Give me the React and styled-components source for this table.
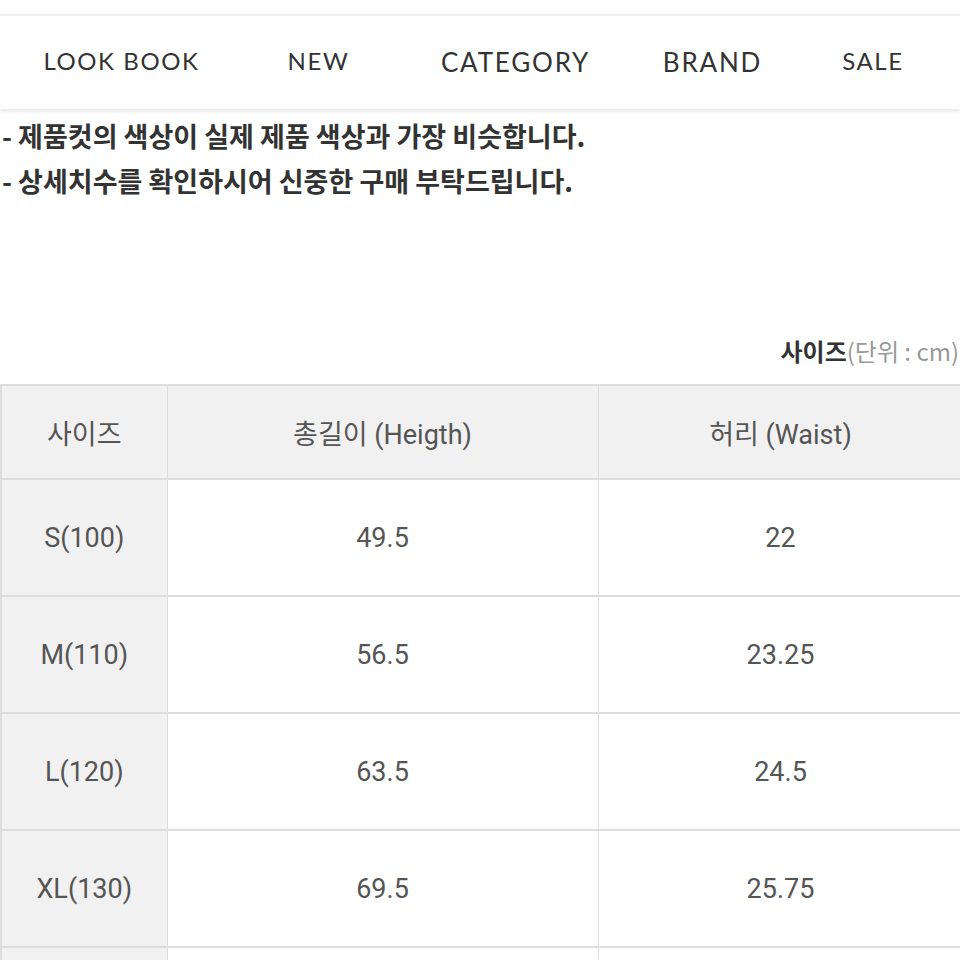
import React from "react";
import styled, { createGlobalStyle } from "styled-components";

const GlobalStyle = createGlobalStyle`
  body {
    margin: 0;
    background: #fff;
    font-family: Roboto, "Noto Sans CJK KR", sans-serif;
  }
`;

const Page = styled.div`
  width: 960px;
  height: 960px;
  overflow: hidden;
  padding-top: 14px;
  box-sizing: border-box;
`;

// 상단 메뉴
const NavBar = styled.nav`
  display: flex;
  align-items: center;
  height: 95px;
  padding-left: 23px;
  padding-bottom: 4px;
  box-sizing: border-box;
  border-top: 2px solid #eeeeee;
  box-shadow: 0 3px 3px rgba(0, 0, 0, 0.08);
  background: #fff;
`;

const NavItem = styled.a`
  width: ${(props) => props.width}px;
  text-align: center;
  font-family: Lato, "Liberation Sans", sans-serif;
  font-size: ${(props) => (props.big ? 26 : 24)}px;
  letter-spacing: ${(props) => (props.big ? 1.8 : 1.6)}px;
  color: #333;
  text-decoration: none;
  padding-top: ${(props) => (props.big ? 2 : 0)}px;
`;

const Notice = styled.div`
  padding: 4px 0 0 2px;
`;

const NoticeLine = styled.p`
  margin: 0;
  font-family: "Noto Sans CJK KR", sans-serif;
  font-weight: 700;
  font-size: 27px;
  line-height: 45px;
  color: #333;
  white-space: nowrap;
`;

const UnitLabel = styled.div`
  margin-top: 132px;
  text-align: right;
  font-family: "Noto Sans CJK KR", sans-serif;
  font-size: 24px;
  line-height: 32px;
  color: #999;
  white-space: nowrap;
  padding-right: 1px;
`;

const UnitStrong = styled.b`
  color: #333;
  font-weight: 700;
`;

const Table = styled.table`
  margin-top: 17px;
  width: 962px;
  border-collapse: collapse;
  table-layout: fixed;
  border-left: 2px solid #dddddd;
`;

const Cell = styled.td`
  height: ${(props) => (props.head ? 92 : 115)}px;
  border: 2px solid #dddddd;
  border-left-width: 1px;
  border-right-width: 1px;
  background: ${(props) => (props.gray ? "#f1f1f1" : "#fff")};
  text-align: center;
  vertical-align: middle;
  font-family: Roboto, "Noto Sans CJK KR", sans-serif;
  font-size: 27px;
  color: #555;
  padding: 0;
`;

const navItems = [
  { label: "LOOK BOOK", width: 197 },
  { label: "NEW", width: 197 },
  { label: "CATEGORY", width: 197, big: true },
  { label: "BRAND", width: 197, big: true },
  { label: "SALE", width: 124 },
];

const rows = [
  ["S(100)", "49.5", "22"],
  ["M(110)", "56.5", "23.25"],
  ["L(120)", "63.5", "24.5"],
  ["XL(130)", "69.5", "25.75"],
  ["", "", ""],
];

const App = () => {
  return (
    <>
      <GlobalStyle />
      <Page>
        <NavBar>
          {navItems.map((item) => (
            <NavItem key={item.label} width={item.width} big={item.big}>
              {item.label}
            </NavItem>
          ))}
        </NavBar>
        <Notice>
          <NoticeLine>- 제품컷의 색상이 실제 제품 색상과 가장 비슷합니다.</NoticeLine>
          <NoticeLine>- 상세치수를 확인하시어 신중한 구매 부탁드립니다.</NoticeLine>
        </Notice>
        <UnitLabel>
          <UnitStrong>사이즈</UnitStrong>(단위 : cm)
        </UnitLabel>
        <Table>
          <colgroup>
            <col style={{ width: 166 }} />
            <col style={{ width: 431 }} />
            <col style={{ width: 365 }} />
          </colgroup>
          <tbody>
            <tr>
              <Cell head gray>사이즈</Cell>
              <Cell head gray>총길이 (Heigth)</Cell>
              <Cell head gray>허리 (Waist)</Cell>
            </tr>
            {rows.map((row, i) => (
              <tr key={i}>
                <Cell gray>{row[0]}</Cell>
                <Cell>{row[1]}</Cell>
                <Cell>{row[2]}</Cell>
              </tr>
            ))}
          </tbody>
        </Table>
      </Page>
    </>
  );
};

export default App;
